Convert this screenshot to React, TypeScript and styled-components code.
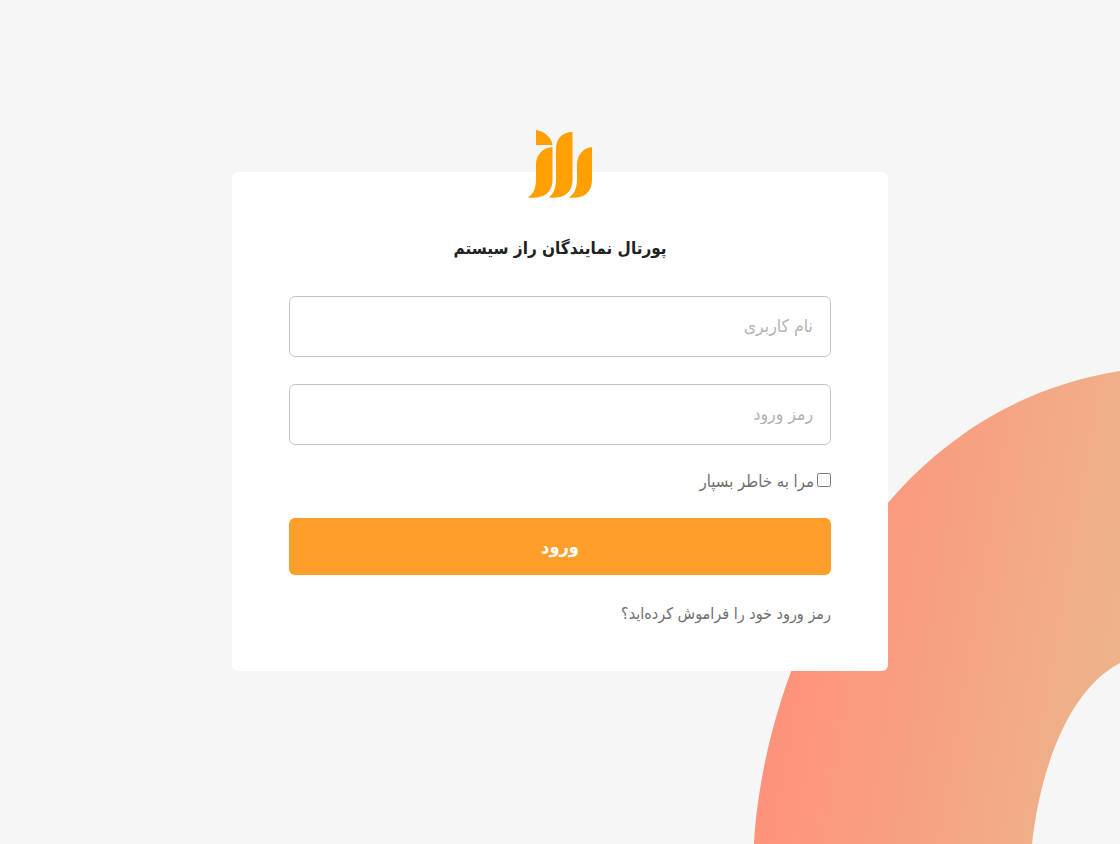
import styled, { createGlobalStyle } from 'styled-components'

const GlobalStyle = createGlobalStyle`
    html, body {
        margin: 0;
        padding: 0;
        height: 100%;
        background: #f6f6f6;
        font-family: "DejaVu Sans Condensed", "DejaVu Sans", sans-serif;
    }
`

const RazLogo = () => (
    <LogoSvg viewBox="0 0 68 72" aria-label="logo">
        <path d="M7 1 C15 2 23 9 23.500 16 L7 16 Z" />
        <path d="M23.500 18 C13 19 7 26 7 36 L7 50 C7 60 4 65 -1 68.500 C13 70 23.500 65 23.500 51 Z" />
        <path d="M43.500 3 C33 3 27 10 27 20 L27 50 C27 60 24 65 20 68.500 C33 70 43.500 65 43.500 51 Z" />
        <path d="M63 18 C54 19 48 26 48 36 L48 50 C48 60 45 65 40 68.500 C53 70 63 65 63 51 Z" />
    </LogoSvg>
)

const App = () => {
    return (
        <Page dir="rtl">
            <GlobalStyle />
            <Ring viewBox="0 0 1120 844" preserveAspectRatio="none">
                <defs>
                    <linearGradient id="ringFill" x1="754" y1="780" x2="1079" y2="835" gradientUnits="userSpaceOnUse">
                        <stop offset="0" stopColor="#ff917a" />
                        <stop offset="1" stopColor="#eeb38a" />
                    </linearGradient>
                </defs>
                <path
                    fill="url(#ringFill)"
                    d="M754 844 C762 690 860 412 1120 371 L1120 663 C1068 690 1040 770 1032 844 Z"
                />
            </Ring>
            <Card>
                <RazLogo />
                <Title>پورتال نمایندگان راز سیستم</Title>
                <Form>
                    <Input type="text" placeholder="نام کاربری" />
                    <Input type="password" placeholder="رمز ورود" />
                    <Remember>
                        <input type="checkbox" />
                        <span>مرا به خاطر بسپار</span>
                    </Remember>
                    <Submit type="button">ورود</Submit>
                    <Forgot href="#">رمز ورود خود را فراموش کرده‌اید؟</Forgot>
                </Form>
            </Card>
        </Page>
    )
}

export default App

const Page = styled.div`
    position: relative;
    min-height: 100vh;
    overflow: hidden;
    display: flex;
    align-items: flex-start;
    justify-content: center;
    padding-top: 172px;
    box-sizing: border-box;
    background: #f6f6f6;
`

const Ring = styled.svg`
    position: absolute;
    inset: 0;
    width: 100%;
    height: 100%;
`

const Card = styled.div`
    position: relative;
    box-sizing: border-box;
    width: 656px;
    height: 499px;
    padding: 57px 57px 0;
    background: #fff;
    border-radius: 6px;
    display: flex;
    flex-direction: column;
`

const LogoSvg = styled.svg`
    position: absolute;
    top: -43px;
    left: 297px;
    width: 68px;
    height: 72px;
    overflow: visible;
    fill: #ff9f00;
`

const Title = styled.h1`
    margin: 0;
    font-size: 17px;
    line-height: 38px;
    font-weight: 700;
    color: #212121;
    text-align: center;
`

const Form = styled.form`
    display: flex;
    flex-direction: column;
    margin-top: 29px;
`

const Input = styled.input`
    box-sizing: border-box;
    width: 100%;
    height: 61px;
    margin-bottom: 27px;
    padding: 0 17px 2px;
    border: 1px solid #c4c4c4;
    border-radius: 6px;
    background: #fff;
    font-family: inherit;
    font-size: 17.5px;
    direction: rtl;
    outline: none;
    &::placeholder {
        color: #b3b3b3;
    }
`

const Remember = styled.label`
    display: flex;
    align-items: center;
    height: 20px;
    margin-top: -1px;
    margin-bottom: 27px;
    font-size: 16.6px;
    color: #6f6f6f;
    > input {
        width: 14px;
        height: 14px;
        margin: -2px 0 0 3px;
    }
`

const Submit = styled.button`
    height: 57px;
    border: none;
    border-radius: 6px;
    background: #ff9f2b;
    color: #fff;
    font-family: inherit;
    font-size: 18px;
    font-weight: 700;
`

const Forgot = styled.a`
    margin-top: 28px;
    font-size: 16px;
    line-height: 22px;
    color: #6f6f6f;
    text-decoration: none;
`
